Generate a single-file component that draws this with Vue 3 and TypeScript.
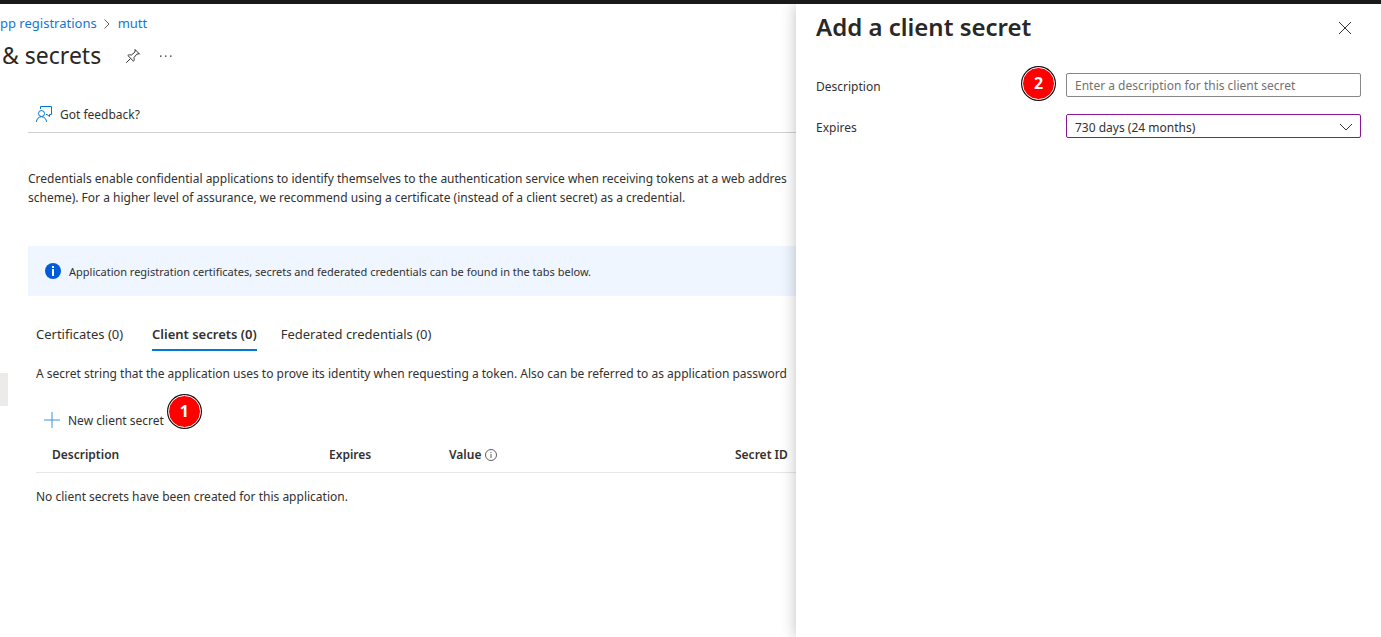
<script setup lang="ts">
import { ref } from 'vue'

interface Tab {
  id: string
  label: string
}

const tabs: Tab[] = [
  { id: 'certificates', label: 'Certificates (0)' },
  { id: 'secrets', label: 'Client secrets (0)' },
  { id: 'federated', label: 'Federated credentials (0)' },
]

const activeTab = ref<string>('secrets')
const description = ref<string>('')
const expires = ref<string>('730')
</script>

<template>
  <div class="portal">
    <div class="topbar"></div>
    <div class="workspace">
      <main class="blade">
        <div class="nav-edge"></div>
        <nav class="breadcrumb" aria-label="Breadcrumb">
          <a href="#">pp registrations</a>
          <svg class="crumb-arrow" viewBox="0 0 8 12" aria-hidden="true"><path d="M1.500 1.500 6 6l-4.500 4.500" /></svg>
          <a href="#">mutt</a>
        </nav>
        <header class="title-row">
          <h1>&amp; secrets</h1>
          <div class="title-actions">
            <button type="button" aria-label="Pin">
              <svg class="pin" viewBox="0 0 16 16" aria-hidden="true">
                <path d="M9.700 1.200 14.800 6.300 M10.300 1.800 9.800 4.200 6.300 7.100 C5 6.600 3.700 6.700 2.800 7.500 L8.500 13.200 C9.300 12.300 9.400 11 8.900 9.700 L11.800 6.200 14.200 5.700 M5.600 10.400 1.200 14.800" />
              </svg>
            </button>
            <button type="button" aria-label="More">
              <svg class="more" viewBox="0 0 12 4" aria-hidden="true"><path d="M0 1.500h1.500v1.200H0zM5 1.500h1.500v1.200H5zM10 1.500h1.500v1.200H10z" /></svg>
            </button>
          </div>
        </header>

        <div class="content">
          <div class="commands">
            <button class="command" type="button">
              <svg class="feedback" viewBox="0 0 16 16" aria-hidden="true">
                <path d="M4.500 3V.500h11v8h-2v2l-2.500-2h-1" />
                <circle cx="5.500" cy="7.500" r="3" />
                <path d="M.500 16c0-3 2.200-5.300 5-5.300s5 2.300 5 5.300" />
              </svg>
              <span>Got feedback?</span>
            </button>
          </div>

          <p class="intro">
            Credentials enable confidential applications to identify themselves to the authentication service when receiving tokens at a web addres<br>
            scheme). For a higher level of assurance, we recommend using a certificate (instead of a client secret) as a credential.
          </p>

          <div class="notice" role="note">
            <svg class="notice-icon" viewBox="0 0 16 16" aria-hidden="true">
              <circle cx="8" cy="8" r="8" />
              <path d="M7 3h2v2H7zM7 6h2v7H7z" />
            </svg>
            <span>Application registration certificates, secrets and federated credentials can be found in the tabs below.</span>
          </div>

          <div class="tab-body">
            <div class="tabs" role="tablist">
              <button
                v-for="tab in tabs"
                :key="tab.id"
                type="button"
                role="tab"
                class="tab"
                :class="{ active: tab.id === activeTab }"
                :aria-selected="tab.id === activeTab"
                @click="activeTab = tab.id"
              >{{ tab.label }}</button>
            </div>

            <p class="hint">A secret string that the application uses to prove its identity when requesting a token. Also can be referred to as application password</p>

            <div class="new-row">
              <button class="command new-secret" type="button">
                <svg class="plus" viewBox="0 0 16 16" aria-hidden="true"><path d="M8 0v16M0 8h16" /></svg>
                <span>New client secret</span>
              </button>
              <span class="step step-one">1</span>
            </div>

            <table class="secrets">
              <thead>
                <tr>
                  <th class="col-description" scope="col">Description</th>
                  <th class="col-expires" scope="col">Expires</th>
                  <th class="col-value" scope="col">
                    <span class="with-info">Value
                      <svg class="info" viewBox="0 0 12 12" aria-hidden="true">
                        <circle cx="6" cy="6" r="5.500" />
                        <path d="M6 3v1M6 5v4" />
                      </svg>
                    </span>
                  </th>
                  <th scope="col">Secret ID</th>
                </tr>
              </thead>
              <tbody>
                <tr>
                  <td colspan="4">No client secrets have been created for this application.</td>
                </tr>
              </tbody>
            </table>
          </div>
        </div>
      </main>

      <aside class="panel" aria-labelledby="panel-title">
        <header class="panel-head">
          <h2 id="panel-title">Add a client secret</h2>
          <button type="button" aria-label="Close">
            <svg class="close" viewBox="0 0 14 14" aria-hidden="true"><path d="M1 1l12 12M13 1 1 13" /></svg>
          </button>
        </header>
        <form class="form" @submit.prevent>
          <div class="field">
            <label for="description">Description</label>
            <span class="step step-two">2</span>
            <input id="description" v-model="description" type="text" placeholder="Enter a description for this client secret">
          </div>
          <div class="field">
            <label for="expires">Expires</label>
            <div class="select-box">
              <select id="expires" v-model="expires">
                <option value="730">730 days (24 months)</option>
              </select>
              <svg class="chevron" viewBox="0 0 14 8" aria-hidden="true"><path d="M1 1l6 6 6-6" /></svg>
            </div>
          </div>
        </form>
      </aside>
    </div>
  </div>
</template>

<style>
body {
  margin: 0;
}
</style>

<style scoped>
.portal {
  min-height: 100vh;
  display: flex;
  flex-direction: column;
  background: #fff;
  color: #323130;
  font: 12px/19px "Noto Sans", "Open Sans", sans-serif;
}
.topbar {
  height: 4px;
  background: #1b1a19;
}
.workspace {
  flex: 1;
  display: grid;
  grid-template-columns: minmax(0, 1fr) 585px;
}
h1, h2, p {
  margin: 0;
}
button {
  padding: 0;
  border: 0;
  background: none;
  color: inherit;
  font: inherit;
  cursor: pointer;
}
svg {
  display: block;
  flex: none;
  fill: none;
  stroke: currentColor;
}
.blade {
  position: relative;
  overflow: hidden;
  white-space: nowrap;
}
.nav-edge {
  position: absolute;
  left: 0;
  top: 369px;
  width: 8px;
  height: 33px;
  background: #edebe9;
}
.breadcrumb {
  display: flex;
  align-items: center;
  padding-top: 10px;
  font-size: 13px;
}
.breadcrumb a {
  color: #0f78d0;
  text-decoration: none;
}
.crumb-arrow {
  width: 8px;
  height: 12px;
  margin: 0 7px 0 6px;
  color: #605e5c;
}
.title-row {
  display: flex;
  align-items: center;
  gap: 24px;
  padding: 6px 0 0 2px;
}
.title-actions {
  display: flex;
  align-items: center;
  gap: 19px;
  padding-top: 2px;
}
h1 {
  font-size: 23px;
  line-height: 32px;
  font-weight: 400;
  color: #292827;
}
.pin {
  width: 16px;
  height: 16px;
}
.more {
  width: 12px;
  height: 4px;
  fill: currentColor;
  stroke: none;
}
.content {
  padding: 29px 0 0 28px;
}
.commands {
  display: flex;
  height: 32px;
  padding-left: 8px;
  border-bottom: 1px solid #d2d0ce;
}
.command {
  display: flex;
  align-items: center;
  gap: 8px;
  height: 28px;
}
.feedback {
  width: 16px;
  height: 16px;
  color: #0078d4;
}
.intro {
  padding: 36px 0 39px;
}
.notice {
  display: flex;
  align-items: center;
  gap: 8px;
  height: 50px;
  padding-left: 17px;
  background: #eff6ff;
  font-size: 11px;
}
.notice-icon {
  width: 16px;
  height: 16px;
  fill: #015cda;
  stroke: none;
}
.notice-icon path {
  fill: #fff;
}
.tab-body {
  padding: 24px 0 0 8px;
}
.tabs {
  display: flex;
  gap: 24px;
}
.tab {
  height: 31px;
  min-width: 92px;
  border-bottom: 2px solid transparent;
  font-size: 13px;
  text-align: left;
}
.tab.active {
  border-color: #0078d4;
  font-weight: 600;
}
.hint {
  padding-top: 13px;
}
.new-row {
  display: flex;
  padding: 12px 0 0 8px;
}
.new-secret {
  height: 40px;
  padding-top: 10px;
}
.plus {
  width: 16px;
  height: 16px;
  color: #3a96dd;
}
.step {
  display: grid;
  place-items: center;
  width: 31px;
  height: 31px;
  border: 1px solid #fff;
  border-radius: 50%;
  background: #f00;
  box-shadow: 0 0 0 1px #111;
  color: #fff;
  font-family: "Open Sans", sans-serif;
  font-size: 16px;
  font-weight: 700;
}
.secrets {
  width: 100%;
  margin-top: 2px;
  border-collapse: collapse;
  table-layout: fixed;
}
th, td {
  padding: 0;
  text-align: left;
}
th {
  height: 35px;
  border-bottom: 1px solid #e6e6e6;
  font-weight: 600;
}
td {
  height: 47px;
}
.col-description {
  width: 277px;
  padding-left: 16px;
}
.col-expires {
  width: 120px;
}
.col-value {
  width: 286px;
}
.with-info {
  display: flex;
  align-items: center;
  gap: 4px;
}
.info {
  width: 12px;
  height: 12px;
  color: #605e5c;
}
.panel {
  position: relative;
  background: #fff;
  box-shadow: 0 0 14px rgba(0, 0, 0, 0.25);
  clip-path: inset(0 0 0 -30px);
}
.panel-head {
  display: flex;
  align-items: center;
  justify-content: space-between;
  padding: 7px 29px 0 20px;
}
h2 {
  padding-bottom: 2px;
  font-size: 24px;
  line-height: 32px;
  font-weight: 600;
  color: #292827;
}
.close {
  width: 14px;
  height: 14px;
}
.form {
  display: grid;
  gap: 17px;
  padding: 28px 20px 0;
}
.field {
  position: relative;
  display: grid;
  grid-template-columns: 250px minmax(0, 1fr);
  align-items: center;
}
.field label {
  padding-top: 2px;
}
.field input,
.field select {
  display: block;
  box-sizing: border-box;
  width: 100%;
  height: 24px;
  margin: 0;
  padding: 0 8px;
  border: 1px solid #8a8886;
  border-radius: 2px;
  background: #fff;
  color: #323130;
  font: inherit;
}
.field input::placeholder {
  color: #737170;
}
.field select {
  appearance: none;
  padding-top: 2px;
  border-color: #881798;
}
.select-box {
  position: relative;
}
.chevron {
  position: absolute;
  right: 8px;
  top: 9px;
  width: 14px;
  height: 8px;
  pointer-events: none;
}
.step-one {
  margin-left: 4px;
}
.step-two {
  position: absolute;
  left: 206px;
  top: -6px;
}
</style>
